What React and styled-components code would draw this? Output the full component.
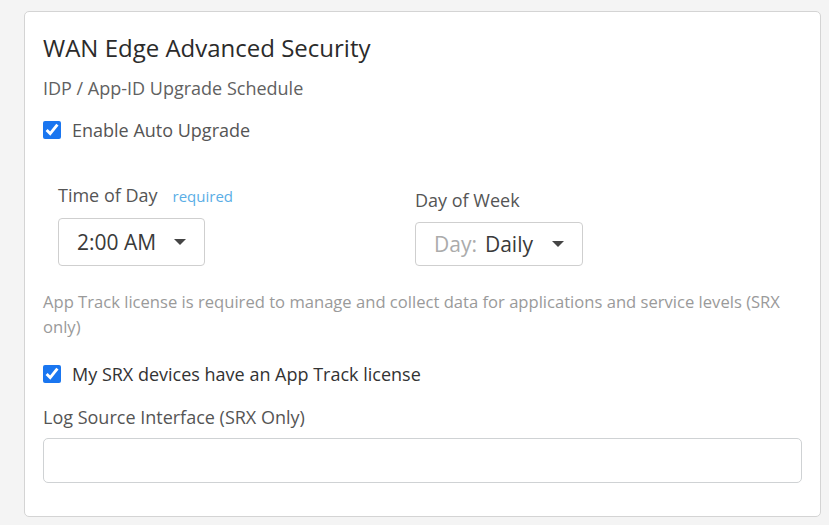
import React from "react";
import styled, { createGlobalStyle } from "styled-components";

const Global = createGlobalStyle`
  html, body { margin: 0; padding: 0; background: #f4f4f4; }
  body { font-family: "Open Sans", "Noto Sans", sans-serif; }
  * { box-sizing: border-box; }
`;

const Page = styled.div`
  padding: 11px 8px 9px 24px;
`;

const Card = styled.section`
  background: #fff;
  border: 1px solid #d4d4d4;
  border-radius: 5px;
  padding: 20px 18px 32px 18px;
  width: 797px;
  height: 506px;
  display: flex;
  flex-direction: column;
`;

const Title = styled.h2`
  margin: 0;
  font-size: 24px;
  font-weight: 400;
  line-height: 32px;
  color: #2b2b2b;
`;

const Subtitle = styled.div`
  margin-top: 12px;
  font-size: 18px;
  line-height: 24px;
  color: #616161;
`;

const CheckRow = styled.label`
  display: flex;
  align-items: center;
  gap: 11px;
  margin-top: ${(p) => p.$top}px;
  font-size: 18px;
  line-height: 24px;
  color: ${(p) => p.$color || "#555"};
`;

const Box = styled.input.attrs({ type: "checkbox" })`
  width: 18px;
  height: 18px;
  margin: 0;
  accent-color: #1a76f0;
`;

const Fields = styled.div`
  display: grid;
  grid-template-columns: 357px auto;
  align-items: end;
  margin-top: 41px;
  padding-left: 15px;
`;

const Field = styled.div`
  display: flex;
  flex-direction: column;
  align-items: flex-start;
`;

const LabelRow = styled.div`
  display: flex;
  align-items: baseline;
  gap: 15px;
  font-size: 18px;
  line-height: 24px;
  color: #555;
  margin-bottom: 10px;
`;

const Required = styled.span`
  font-size: 15px;
  color: #5aaee6;
`;

const Select = styled.div`
  display: flex;
  align-items: center;
  height: ${(p) => p.$h}px;
  width: ${(p) => p.$w}px;
  padding: 0 18px;
  border: 1px solid #cfcfcf;
  border-radius: 4px;
  font-size: 21px;
  color: #3a3a3a;
  gap: 8px;
`;

const Muted = styled.span`
  color: #ababab;
`;

const Caret = styled.span`
  margin-left: auto;
  width: 0;
  height: 0;
  border-left: 6px solid transparent;
  border-right: 6px solid transparent;
  border-top: 6px solid #454545;
`;

const Note = styled.p`
  margin: 23px 0 0;
  font-size: 16.6px;
  line-height: 25px;
  color: #9a9a9a;
`;

const FieldLabel = styled.div`
  margin-top: 19px;
  font-size: 18px;
  line-height: 24px;
  color: #555;
`;

const TextInput = styled.input`
  margin-top: 9px;
  height: 45px;
  width: 100%;
  border: 1px solid #cfd2d4;
  border-radius: 5px;
  font: inherit;
  padding: 0 12px;
  outline: none;
`;

export default function App() {
  return (
    <>
      <Global />
      <Page>
        <Card>
          <Title>WAN Edge Advanced Security</Title>
          <Subtitle>IDP / App-ID Upgrade Schedule</Subtitle>
          <CheckRow $top={18}>
            <Box defaultChecked />
            Enable Auto Upgrade
          </CheckRow>
          <Fields>
            <Field>
              <LabelRow>
                Time of Day <Required>required</Required>
              </LabelRow>
              <Select $h={48} $w={147}>
                2:00 AM
                <Caret />
              </Select>
            </Field>
            <Field>
              <LabelRow>Day of Week</LabelRow>
              <Select $h={44} $w={168}>
                <Muted>Day:</Muted> Daily
                <Caret />
              </Select>
            </Field>
          </Fields>
          <Note>
            App Track license is required to manage and collect data for
            applications and service levels (SRX only)
          </Note>
          <CheckRow $top={23} $color="#333">
            <Box defaultChecked />
            My SRX devices have an App Track license
          </CheckRow>
          <FieldLabel>Log Source Interface (SRX Only)</FieldLabel>
          <TextInput />
        </Card>
      </Page>
    </>
  );
}
